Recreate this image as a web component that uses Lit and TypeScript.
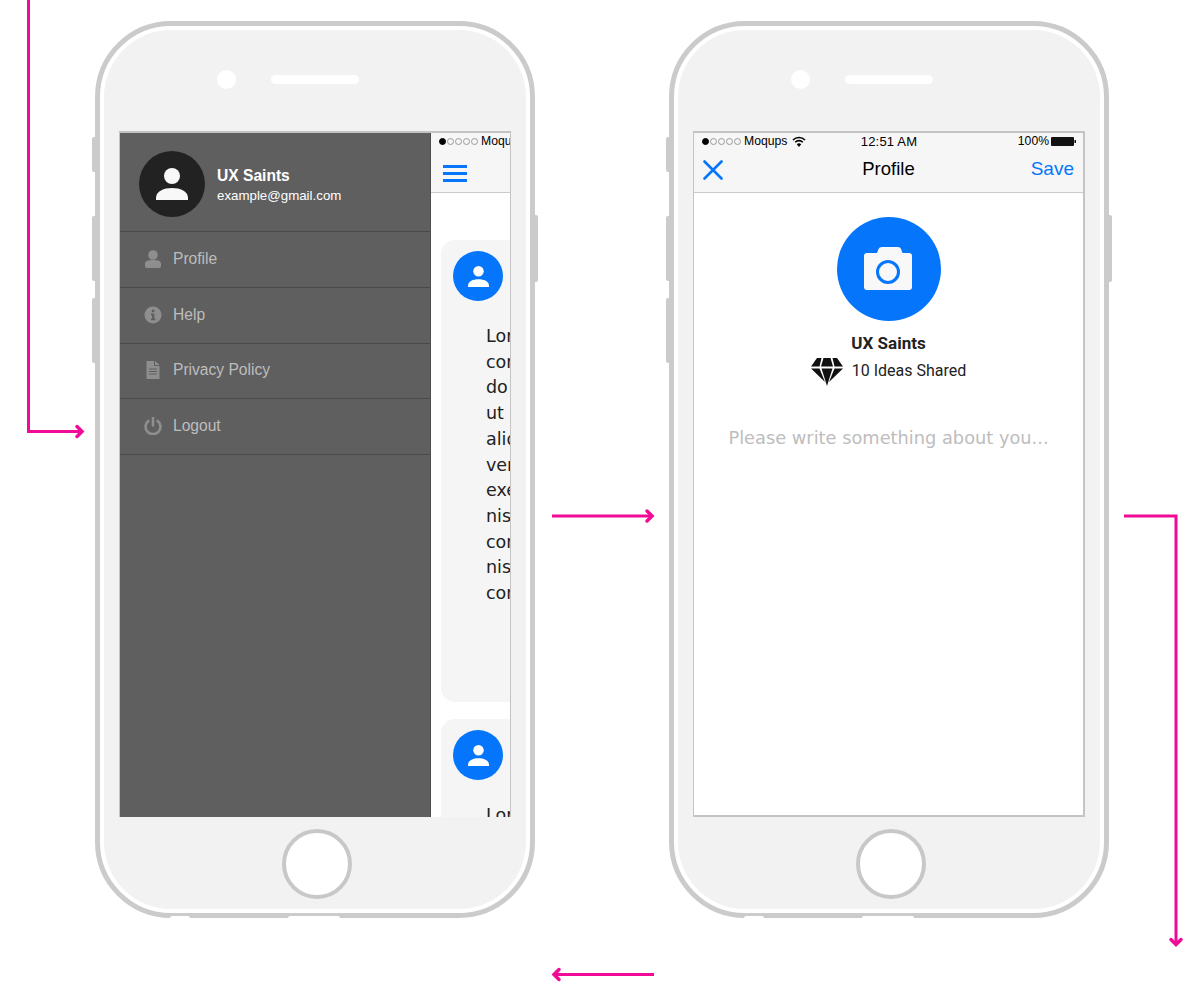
import { LitElement, html, css, svg, unsafeCSS, nothing } from 'lit';
import { customElement, property } from 'lit/decorators.js';

const BLUE = '#0576fb';
const blue = unsafeCSS(BLUE);

const LOREM_LINES = [
  'Lorem ipsum dolor sit amet,',
  'consectetur adipiscing elit, sed',
  'do eiusmod tempor incididunt',
  'ut labore et dolore magna',
  'aliqua. Ut enim ad minim',
  'veniam, quis nostrud',
  'exercitation ullamco laboris',
  'nisi ut aliquip ex ea commodo',
  'consequat. Duis aute irure',
  'nisi ut aliquip ex ea commodo',
  'consequat.',
];

const personIcon = (size: number, color: string) => html`
  <svg width=${size} height=${size} viewBox="0 0 32 32">
    <circle cx="16" cy="8" r="8" fill=${color}></circle>
    <path d="M0 32v-2C0 23 8 20 16 20s16 3 16 10v2z" fill=${color}></path>
  </svg>
`;

/* Device outline: body, speaker, home button and the side keys */
@customElement('phone-shell')
export class PhoneShell extends LitElement {
  static override styles = css`
    :host {
      position: absolute;
      top: 21px;
      width: 440px;
      height: 897px;
      display: block;
    }
    .body {
      box-sizing: border-box;
      width: 100%;
      height: 100%;
      border: 5px solid #cbcbcb;
      border-radius: 76px;
      background: #fff;
      padding: 4px;
    }
    .face {
      height: 100%;
      border-radius: 67px;
      background: #f2f2f2;
      display: flex;
      flex-direction: column;
    }
    .top {
      height: 101px;
      box-sizing: border-box;
      padding: 0 0 2px 113px;
      display: flex;
      align-items: center;
      gap: 35px;
      flex: none;
    }
    .camera {
      width: 19px;
      height: 19px;
      border-radius: 50%;
      background: #fff;
    }
    .speaker {
      width: 88px;
      height: 9px;
      border-radius: 5px;
      background: #fff;
    }
    .screen {
      margin: 0 15px;
      height: 686px;
      flex: none;
      overflow: hidden;
      background: #fff;
    }
    .bottom {
      flex: 1;
      display: flex;
      align-items: center;
      justify-content: center;
      padding: 2px 0 0 3px;
    }
    .home {
      box-sizing: border-box;
      width: 70px;
      height: 70px;
      border: 4px solid #c8c8c8;
      border-radius: 50%;
      background: #fff;
    }
    .key {
      position: absolute;
      width: 4px;
      background: #cbcbcb;
    }
    .key.left {
      left: -3px;
      border-radius: 2px 0 0 2px;
    }
    .key.right {
      right: -3px;
      border-radius: 0 2px 2px 0;
    }
    .notch {
      position: absolute;
      bottom: 0;
      height: 2px;
      background: #fff;
      border-radius: 3px 3px 0 0;
    }
  `;

  override render() {
    return html`
      <div class="key left" style="top:116px;height:35px"></div>
      <div class="key left" style="top:195px;height:65px"></div>
      <div class="key left" style="top:277px;height:65px"></div>
      <div class="key right" style="top:194px;height:67px"></div>
      <div class="body">
        <div class="face">
          <div class="top">
            <div class="camera"></div>
            <div class="speaker"></div>
          </div>
          <div class="screen"><slot></slot></div>
          <div class="bottom"><div class="home"></div></div>
        </div>
      </div>
      <div class="notch" style="left:75px;width:20px"></div>
      <div class="notch" style="left:193px;width:52px"></div>
    `;
  }
}

@customElement('status-bar')
export class StatusBar extends LitElement {
  // compact: only the carrier part, the drawer covers the rest of the bar
  @property({ type: Boolean }) compact = false;

  static override styles = css`
    :host {
      display: block;
      width: 388px;
      height: 16px;
    }
    .bar {
      height: 100%;
      display: grid;
      grid-template-columns: 1fr auto 1fr;
      align-items: center;
      padding: 0 6px 0 8px;
      box-sizing: border-box;
      font: 12.2px 'Liberation Sans', Arial, sans-serif;
      color: #000;
      white-space: nowrap;
    }
    .left {
      display: flex;
      align-items: center;
    }
    .dots {
      display: flex;
      gap: 1px;
      margin-right: 3px;
    }
    .dot {
      box-sizing: border-box;
      width: 7px;
      height: 7px;
      border-radius: 50%;
      border: 1px solid #9a9a9a;
    }
    .dot.on {
      background: #000;
      border-color: #000;
    }
    .carrier {
      margin-right: 5px;
    }
    .time {
      font-size: 13px;
      letter-spacing: 0.2px;
    }
    .batt {
      display: flex;
      align-items: center;
      justify-content: flex-end;
      gap: 2px;
    }
  `;

  override render() {
    return html`
      <div class="bar">
        <div class="left">
          <div class="dots">
            <span class="dot on"></span><span class="dot"></span><span class="dot"></span><span class="dot"></span><span class="dot"></span>
          </div>
          <span class="carrier">Moqups</span>
          <svg width="14" height="11" viewBox="0 0 14 11" fill="none" stroke="#000" stroke-width="1.6">
            <path d="M1 4a8.5 8.5 0 0 1 12 0"></path>
            <path d="M3.2 6.2a5.4 5.4 0 0 1 7.6 0"></path>
            <path d="M7 11L4.8 8.3a3.2 3.2 0 0 1 4.4 0z" fill="#000" stroke="none"></path>
          </svg>
        </div>
        ${this.compact
          ? nothing
          : html`
              <div class="time">12:51 AM</div>
              <div class="batt">
                <span>100%</span>
                <svg width="25" height="9" viewBox="0 0 25 9">
                  <rect x="0" y="0" width="23" height="9" rx="1" fill="#111"></rect>
                  <rect x="23.5" y="3" width="1.5" height="3" fill="#111"></rect>
                </svg>
              </div>
            `}
      </div>
    `;
  }
}

/* Left phone: open drawer over the feed */
@customElement('drawer-screen')
export class DrawerScreen extends LitElement {
  static override styles = css`
    :host {
      display: flex;
      height: 686px;
      box-sizing: border-box;
      border-top: 2px solid #c4c4c4;
      border-left: 1px solid #c4c4c4;
      font-family: 'Liberation Sans', Arial, sans-serif;
    }
    .drawer {
      box-sizing: border-box;
      width: 311px;
      flex: none;
      background: #5f5f5f;
      border-right: 1px solid #4e4e4e;
      color: #fff;
    }
    .head {
      box-sizing: border-box;
      height: 99px;
      padding: 18px 19px 0;
      display: flex;
      gap: 12px;
      border-bottom: 1px solid #4a4a4a;
    }
    .avatar {
      width: 66px;
      height: 66px;
      border-radius: 50%;
      background: #222;
      display: flex;
      align-items: center;
      justify-content: center;
      flex: none;
    }
    .who {
      padding-top: 16px;
    }
    .name {
      font-size: 15.6px;
      font-weight: 700;
      line-height: 18px;
    }
    .mail {
      font-size: 13.3px;
      line-height: 18px;
      margin-top: 2px;
    }
    .row {
      box-sizing: border-box;
      height: 56px;
      border-bottom: 1px solid #4a4a4a;
      display: flex;
      align-items: center;
      padding: 0 0 2px 24px;
      gap: 11px;
      color: #bdbdbd;
      font-size: 15.6px;
    }
    .row.short {
      height: 55px;
    }
    .ico {
      width: 18px;
      height: 18px;
      flex: none;
    }
    .feed {
      box-sizing: border-box;
      width: 80px;
      flex: none;
      overflow: hidden;
      border-right: 1px solid #c4c4c4;
    }
    .nav {
      background: #f6f6f6;
      height: 59px;
      border-bottom: 1px solid #cacaca;
    }
    .burger {
      padding: 16px 0 0 12px;
      width: 24px;
      display: flex;
      flex-direction: column;
      gap: 4px;
    }
    .burger i {
      display: block;
      height: 3px;
      background: ${blue};
    }
    .cards {
      padding: 47px 0 0 10px;
      display: flex;
      flex-direction: column;
      gap: 17px;
    }
    .card {
      width: 300px;
      height: 462px;
      box-sizing: border-box;
      background: #f5f5f5;
      border-radius: 14px;
      padding: 11px 0 0 12px;
    }
    .blue {
      width: 50px;
      height: 50px;
      border-radius: 50%;
      background: ${blue};
      display: flex;
      align-items: center;
      justify-content: center;
    }
    .text {
      margin: 23px 0 0 33px;
      font: 17.5px/25.7px 'DejaVu Sans', sans-serif;
      color: #222;
      white-space: nowrap;
    }
  `;

  private renderRow(label: string, icon: unknown, short = false) {
    return html`<div class="row ${short ? 'short' : ''}">${icon}<span>${label}</span></div>`;
  }

  override render() {
    const grey = '#8e8e8e';
    return html`
      <div class="drawer">
        <div class="head">
          <div class="avatar">${personIcon(32, '#f8f8f8')}</div>
          <div class="who">
            <div class="name">UX Saints</div>
            <div class="mail">example@gmail.com</div>
          </div>
        </div>
        ${this.renderRow('Profile', html`<svg class="ico" viewBox="0 0 18 18">
          <circle cx="9" cy="5" r="4.8" fill=${grey}></circle>
          <path d="M1 16v-2.5C1 11 4 10 9 10s8 1 8 3.5V16a2 2 0 0 1-2 2H3a2 2 0 0 1-2-2z" fill=${grey}></path>
        </svg>`)}
        ${this.renderRow('Help', html`<svg class="ico" viewBox="0 0 18 18">
          <circle cx="9" cy="9" r="8.5" fill=${grey}></circle>
          <rect x="7.8" y="3.6" width="2.6" height="2.6" rx="0.8" fill="#5f5f5f"></rect>
          <path d="M7 7.6h3.3v5H11.4v1.6H7v-1.6h1.1V9.2H7z" fill="#5f5f5f"></path>
        </svg>`)}
        ${this.renderRow('Privacy Policy', html`<svg class="ico" viewBox="0 0 18 18">
          <path d="M2.5 0H10v5h5.5v13h-13z" fill=${grey}></path>
          <path d="M11 0l4.5 4H11z" fill=${grey}></path>
          <path d="M5 8h8M5 10.5h8M5 13h8" stroke="#5f5f5f" stroke-width="1"></path>
        </svg>`, true)}
        ${this.renderRow('Logout', html`<svg class="ico" viewBox="0 0 18 18" fill="none" stroke=${grey} stroke-width="2.6">
          <path d="M12.8 3.4a7.4 7.4 0 1 1-7.6 0"></path>
          <path d="M9 0.5v8" stroke-linecap="round"></path>
        </svg>`)}
      </div>
      <div class="feed">
        <div class="nav">
          <status-bar compact></status-bar>
          <div class="burger"><i></i><i></i><i></i></div>
        </div>
        <div class="cards">
          ${[0, 1].map(
            () => html`
              <div class="card">
                <div class="blue">${personIcon(21, '#fff')}</div>
                <div class="text">${LOREM_LINES.map((l) => html`<div>${l}</div>`)}</div>
              </div>
            `,
          )}
        </div>
      </div>
    `;
  }
}

/* Right phone: edit profile */
@customElement('profile-screen')
export class ProfileScreen extends LitElement {
  static override styles = css`
    :host {
      display: block;
      height: 686px;
      box-sizing: border-box;
      border: 1px solid #c4c4c4;
      border-width: 2px 2px 2px 1px;
      font-family: 'Liberation Sans', Arial, sans-serif;
    }
    .nav {
      background: #f6f6f6;
      height: 59px;
      border-bottom: 1px solid #cacaca;
    }
    .navrow {
      display: grid;
      grid-template-columns: 1fr auto 1fr;
      align-items: center;
      height: 42px;
      padding: 0 9px;
    }
    .title {
      font-size: 18.5px;
      color: #000;
      padding-bottom: 2px;
    }
    .save {
      font-size: 19px;
      color: ${blue};
      text-align: right;
      padding-bottom: 2px;
    }
    .main {
      display: flex;
      flex-direction: column;
      align-items: center;
      padding-top: 24px;
    }
    .photo {
      width: 104px;
      height: 104px;
      border-radius: 50%;
      background: ${blue};
      display: flex;
      align-items: center;
      justify-content: center;
    }
    .photo svg {
      margin: 0 1px 2px 0;
    }
    .name {
      margin-top: 12px;
      font: 700 17px/20px Roboto, sans-serif;
      color: #222;
    }
    .ideas {
      display: flex;
      align-items: center;
      gap: 9px;
      margin-top: 3px;
      font: 16px/30px Roboto, sans-serif;
      color: #222;
    }
    .about {
      margin-top: 39px;
      font: 17.8px/26px 'DejaVu Sans', sans-serif;
      color: #bdbdbd;
      white-space: nowrap;
    }
  `;

  override render() {
    return html`
      <div class="nav">
        <status-bar></status-bar>
        <div class="navrow">
          <svg width="20" height="20" viewBox="0 0 20 20" stroke=${BLUE} stroke-width="2.6" stroke-linecap="round">
            <path d="M1.5 1.5l17 17M18.5 1.5l-17 17"></path>
          </svg>
          <span class="title">Profile</span>
          <span class="save">Save</span>
        </div>
      </div>
      <div class="main">
        <div class="photo">
          <svg width="48" height="43" viewBox="0 0 48 43">
            <path d="M3 6h10l1.500-4Q15.300 0 18 0h16q2.500 0 3 2l1.500 4H45q3 0 3 3v31q0 3-3 3H3q-3 0-3-3V9q0-3 3-3z" fill="#f8f8f8"></path>
            <circle cx="24" cy="25" r="10.500" fill="none" stroke=${BLUE} stroke-width="3"></circle>
          </svg>
        </div>
        <div class="name">UX Saints</div>
        <div class="ideas">
          <svg width="32" height="29" viewBox="0 0 32 29" fill="#111">
            <path d="M0 9.500L6 1h4.500L8.500 9.500z"></path>
            <path d="M12.500 1h7l2.500 8.500H10z"></path>
            <path d="M21.500 1H26l6 8.500h-8.500z"></path>
            <path d="M0 11.500h8.500L14 25z"></path>
            <path d="M10.500 11.500h11L16 29z"></path>
            <path d="M23.500 11.500H32L18 25z"></path>
          </svg>
          <span>10 Ideas Shared</span>
        </div>
        <div class="about">Please write something about you...</div>
      </div>
    `;
  }
}

@customElement('app-root')
export class AppRoot extends LitElement {
  @property({ type: String }) pink = '#f00a96';

  static override styles = css`
    :host {
      display: block;
      position: relative;
      width: 1200px;
      height: 1000px;
      overflow: hidden;
      background: #fff;
    }
    .arrows {
      position: absolute;
      inset: 0;
    }
    .arrows .head {
      stroke-width: 3.5;
    }
  `;

  private arrow(points: string, head: string) {
    return svg`
      <polyline points=${points}></polyline>
      <polyline class="head" points=${head} stroke-linecap="round" stroke-linejoin="miter"></polyline>
    `;
  }

  override render() {
    return html`
      <phone-shell style="left:95px"><drawer-screen></drawer-screen></phone-shell>
      <phone-shell style="left:669px"><profile-screen></profile-screen></phone-shell>
      <svg class="arrows" width="1200" height="1000" fill="none" stroke=${this.pink} stroke-width="3">
        ${this.arrow('28.5,0 28.5,431.5 81,431.5', '77,426.5 82,431.5 77,436.5')}
        ${this.arrow('552,516 651,516', '647,511 652,516 647,521')}
        ${this.arrow('1124,516 1176,516 1176,943', '1171,939.5 1176,944.5 1181,939.5')}
        ${this.arrow('654,974.5 555,974.5', '559,969.5 554,974.5 559,979.5')}
      </svg>
    `;
  }
}
